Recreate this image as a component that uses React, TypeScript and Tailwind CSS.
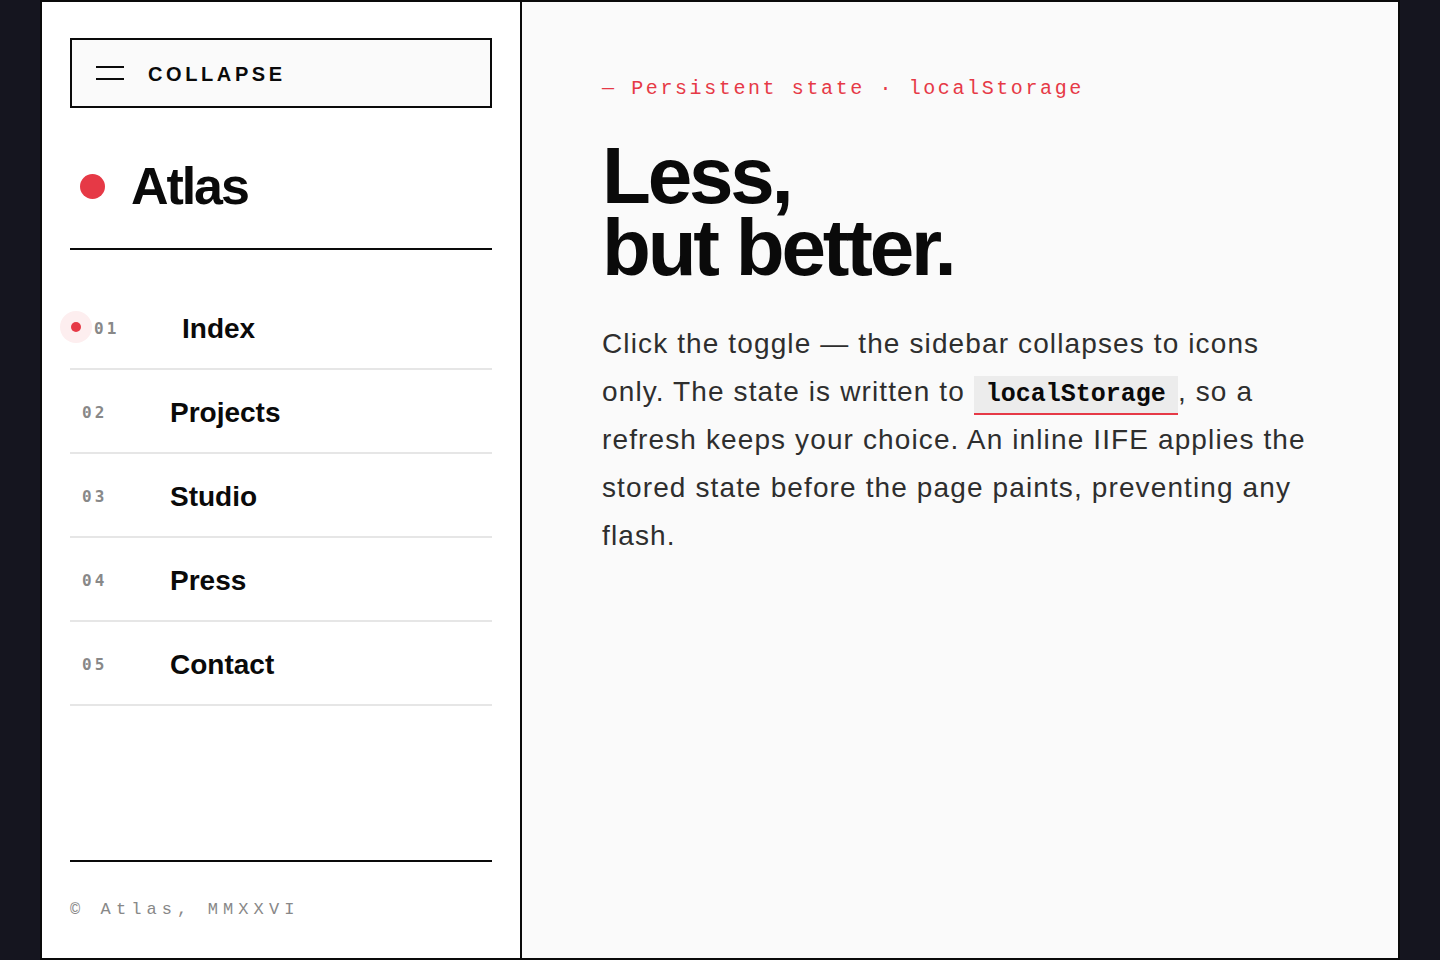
import React from "react";

const navItems = [
  { num: "01", label: "Index", active: true },
  { num: "02", label: "Projects" },
  { num: "03", label: "Studio" },
  { num: "04", label: "Press" },
  { num: "05", label: "Contact" },
];

const Sidebar = () => {
  return (
    <aside className="flex h-full w-[480px] shrink-0 flex-col border-r-2 border-[#0a0a0a] bg-white px-[28px] pt-9">
      <button className="flex h-[70px] w-full items-center gap-6 border-2 border-[#0a0a0a] bg-[#fafafa] pl-6 text-left">
        <span className="flex h-[14px] w-7 flex-col justify-between">
          <span className="block h-[2px] w-full bg-[#0a0a0a]" />
          <span className="block h-[2px] w-full bg-[#0a0a0a]" />
        </span>
        <span className="pt-[2px] text-[20px] font-bold uppercase leading-none tracking-[0.18em] text-[#0a0a0a]">
          Collapse
        </span>
      </button>

      <div className="flex items-center gap-[26px] border-b-2 border-[#0a0a0a] pb-9 pl-[10px] pt-[52px]">
        <span className="h-[25px] w-[25px] rounded-full bg-[#e63946]" />
        <h1 className="text-[52px] font-bold leading-none tracking-[-0.04em] text-[#0a0a0a]">
          Atlas
        </h1>
      </div>

      <nav className="pt-9">
        {navItems.map((item) => (
          <a
            key={item.num}
            href="#"
            className="relative flex h-[84px] items-center border-b-2 border-[#e6e6e6] pl-3 pt-[3px]"
          >
            {item.active && (
              <span className="absolute left-[-10px] top-1/2 flex h-8 w-8 -translate-y-1/2 items-center justify-center rounded-full bg-[#fdeeef]">
                <span className="h-2.5 w-2.5 rounded-full bg-[#e63946]" />
              </span>
            )}
            <span
              className={
                item.active
                  ? "flex translate-x-3 items-center gap-6"
                  : "flex items-center gap-6"
              }
            >
              <span className="w-16 font-['DejaVu_Sans_Mono',monospace] text-[16px] font-bold tracking-[0.2em] text-[#888888]">
                {item.num}
              </span>
              <span className="text-[28px] font-bold leading-none text-[#0a0a0a]">
                {item.label}
              </span>
            </span>
          </a>
        ))}
      </nav>

      <div className="flex-1" />

      <footer className="flex h-[98px] items-center border-t-2 border-[#0a0a0a]">
        <p className="font-['Liberation_Mono',monospace] text-[17px] leading-5 tracking-[0.3em] text-[#888888]">
          © Atlas, MMXXVI
        </p>
      </footer>
    </aside>
  );
};

const Main = () => {
  return (
    <main className="flex-1 bg-[#fafafa] pl-20 pt-[75px]">
      <p className="font-['Liberation_Mono',monospace] text-[20px] leading-6 tracking-[0.13em] text-[#e63946]">
        — Persistent state · localStorage
      </p>
      <h2 className="mt-[39px] text-[80px] font-bold leading-[0.9] tracking-[-0.04em] text-[#0a0a0a]">
        Less,
        <br />
        but better.
      </h2>
      <p className="mt-9 max-w-[720px] text-[28px] leading-[48px] tracking-[0.04em] text-[#2e2e2e]">
        Click the toggle — the sidebar collapses to icons only. The state is
        written to{" "}
        <code className="border-b-2 border-[#e63946] bg-[#ececec] px-3 py-[4px] font-['Liberation_Mono',monospace] text-[25px] font-bold leading-none tracking-normal text-[#0a0a0a]">
          localStorage
        </code>
        , so a refresh keeps your choice. An inline IIFE applies the stored
        state before the page paints, preventing any flash.
      </p>
    </main>
  );
};

export default function App() {
  return (
    <div className="h-[960px] w-full bg-[#15151f] px-10 font-['Liberation_Sans',Arial,sans-serif]">
      <div className="flex h-full border-2 border-[#0a0a0a]">
        <Sidebar />
        <Main />
      </div>
    </div>
  );
}
